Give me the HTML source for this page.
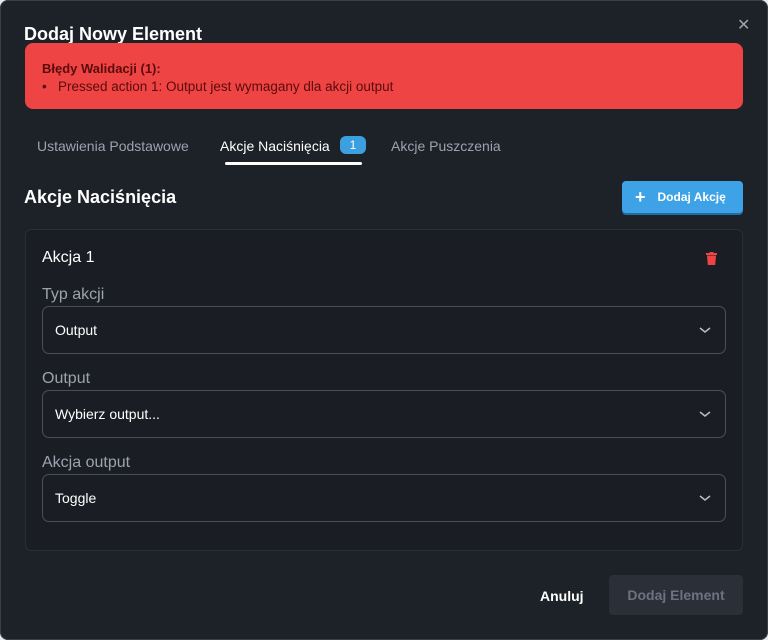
<!DOCTYPE html>
<html><head><meta charset="utf-8"><style>
*{box-sizing:border-box;margin:0;padding:0}
body{width:768px;height:640px;background:#e8e8e8;font-family:"Liberation Sans",sans-serif;overflow:hidden;position:relative}
.modal{position:absolute;left:0;top:0;width:768px;height:640px;background:#1d2229;box-shadow:inset 0 0 0 1px #3a3f46;border-radius:8px;color:#fff}
.abs{position:absolute}
.title{left:24px;top:24px;font-size:18px;font-weight:bold;color:#fff}
.close{left:737px;top:15px;font-size:16px;color:#9ca3af}
.err{left:25px;top:43px;width:718px;height:66px;background:#ef4444;border-radius:8px;color:#4a0a0a}
.err b{position:absolute;left:17px;top:18px;font-size:13px;color:#5a0b0b}
.err span{position:absolute;left:17px;top:36px;font-size:13.5px;color:#5a0b0b}
.tab{top:138px;font-size:14px;color:#9ca3af}
.badge{left:340px;top:136px;width:26px;height:18px;background:#3b9fe0;border-radius:6px;color:#fff;font-size:12px;text-align:center;line-height:18px}
.uline{left:225px;top:162px;width:137px;height:3px;background:#fff;border-radius:2px}
.h2{left:24px;top:187px;font-size:18px;font-weight:bold}
.btn{left:622px;top:181px;width:121px;height:32px;background:#3ea3e6;border-radius:4px;font-size:12px;font-weight:bold;color:#fff;line-height:32px;box-shadow:0 2px 0 #1d6fa3}
.card{left:25px;top:229px;width:718px;height:322px;background:#1a1e24;border:1px solid #2a2f36;border-radius:6px}
.lbl{font-size:16px;color:#9ca3af;left:42px}
.sel{left:42px;width:684px;height:48px;border:1px solid #4a4f57;border-radius:7px;font-size:14px;color:#fff;padding:15px 12px}
.chev{position:absolute;right:14px;top:18px}
.foot1{left:540px;top:588px;font-size:14px;font-weight:bold;color:#fff}
.foot2{left:609px;top:575px;width:134px;height:40px;background:#2b3038;border-radius:4px;color:#6b7280;font-size:14px;font-weight:bold;text-align:center;line-height:40px}
</style></head><body><div class="modal">
<div class="abs title">Dodaj Nowy Element</div>
<div class="abs close">✕</div>
<div class="abs err"><b>Błędy Walidacji (1):</b><span>•&nbsp;&nbsp;&nbsp;Pressed action 1: Output jest wymagany dla akcji output</span></div>
<div class="abs tab" style="left:37px">Ustawienia Podstawowe</div>
<div class="abs tab" style="left:220px;color:#fff">Akcje Naciśnięcia</div>
<div class="abs badge">1</div>
<div class="abs tab" style="left:391px">Akcje Puszczenia</div>
<div class="abs uline"></div>
<div class="abs h2">Akcje Naciśnięcia</div>
<div class="abs btn"><span style="font-size:18px;margin-left:13px;vertical-align:-2px">+</span><span style="margin-left:12px">Dodaj Akcję</span></div>
<div class="abs card"></div>
<div class="abs" style="left:42px;top:249px;font-size:16px;color:#fff">Akcja 1</div>
<svg class="abs" style="left:706px;top:252px" width="11" height="13" viewBox="0 0 11 13"><rect x="0" y="1" width="11" height="2" fill="#ef4444"/><rect x="3.5" y="0" width="4" height="2" fill="#ef4444"/><path d="M1 3.5h9l-.8 9.5H1.8z" fill="#ef4444"/></svg>
<div class="abs lbl" style="top:286px">Typ akcji</div>
<div class="abs sel" style="top:306px">Output<svg class="chev" width="12" height="10"><path d="M1 3l5 4 5-4" stroke="#bbb" stroke-width="1.5" fill="none"/></svg></div>
<div class="abs lbl" style="top:370px">Output</div>
<div class="abs sel" style="top:390px">Wybierz output...<svg class="chev" width="12" height="10"><path d="M1 3l5 4 5-4" stroke="#bbb" stroke-width="1.5" fill="none"/></svg></div>
<div class="abs lbl" style="top:454px">Akcja output</div>
<div class="abs sel" style="top:474px">Toggle<svg class="chev" width="12" height="10"><path d="M1 3l5 4 5-4" stroke="#bbb" stroke-width="1.5" fill="none"/></svg></div>
<div class="abs foot1">Anuluj</div>
<div class="abs foot2">Dodaj Element</div>
</div></body></html>
